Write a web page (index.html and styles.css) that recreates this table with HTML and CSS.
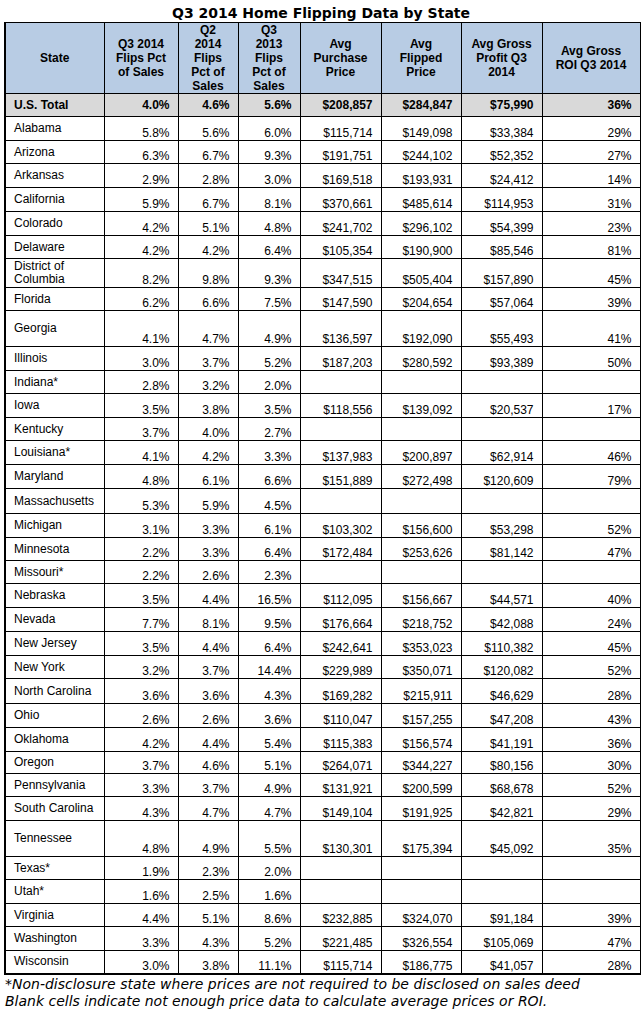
FILE: index.html
```html
<!DOCTYPE html>
<html lang="en">
<head>
<meta charset="utf-8">
<title>Q3 2014 Home Flipping Data by State</title>
<link rel="stylesheet" href="styles.css">
</head>
<body>
<div class="page">
  <h1 class="title">Q3 2014 Home Flipping Data by State</h1>
  <table class="flips">
    <colgroup>
      <col class="c-state"><col class="c-q3"><col class="c-q2"><col class="c-q313">
      <col class="c-buy"><col class="c-flip"><col class="c-profit"><col class="c-roi">
    </colgroup>
    <thead>
      <tr class="head">
        <th>State</th>
        <th>Q3 2014<br>Flips Pct<br>of Sales</th>
        <th>Q2<br>2014<br>Flips<br>Pct of<br>Sales</th>
        <th>Q3<br>2013<br>Flips<br>Pct of<br>Sales</th>
        <th>Avg<br>Purchase<br>Price</th>
        <th>Avg<br>Flipped<br>Price</th>
        <th>Avg Gross<br>Profit Q3<br>2014</th>
        <th>Avg Gross<br>ROI Q3 2014</th>
      </tr>
    </thead>
    <tbody>
      <tr class="total h23"><td class="st">U.S. Total</td><td>4.0%</td><td>4.6%</td><td>5.6%</td><td>$208,857</td><td>$284,847</td><td>$75,990</td><td>36%</td></tr>
      <tr><td class="st">Alabama</td><td>5.8%</td><td>5.6%</td><td>6.0%</td><td>$115,714</td><td>$149,098</td><td>$33,384</td><td>29%</td></tr>
      <tr class="h23"><td class="st">Arizona</td><td>6.3%</td><td>6.7%</td><td>9.3%</td><td>$191,751</td><td>$244,102</td><td>$52,352</td><td>27%</td></tr>
      <tr><td class="st">Arkansas</td><td>2.9%</td><td>2.8%</td><td>3.0%</td><td>$169,518</td><td>$193,931</td><td>$24,412</td><td>14%</td></tr>
      <tr><td class="st">California</td><td>5.9%</td><td>6.7%</td><td>8.1%</td><td>$370,661</td><td>$485,614</td><td>$114,953</td><td>31%</td></tr>
      <tr><td class="st">Colorado</td><td>4.2%</td><td>5.1%</td><td>4.8%</td><td>$241,702</td><td>$296,102</td><td>$54,399</td><td>23%</td></tr>
      <tr class="h23"><td class="st">Delaware</td><td>4.2%</td><td>4.2%</td><td>6.4%</td><td>$105,354</td><td>$190,900</td><td>$85,546</td><td>81%</td></tr>
      <tr class="h29"><td class="st">District of Columbia</td><td>8.2%</td><td>9.8%</td><td>9.3%</td><td>$347,515</td><td>$505,404</td><td>$157,890</td><td>45%</td></tr>
      <tr class="h23"><td class="st">Florida</td><td>6.2%</td><td>6.6%</td><td>7.5%</td><td>$147,590</td><td>$204,654</td><td>$57,064</td><td>39%</td></tr>
      <tr class="h36"><td class="st">Georgia</td><td>4.1%</td><td>4.7%</td><td>4.9%</td><td>$136,597</td><td>$192,090</td><td>$55,493</td><td>41%</td></tr>
      <tr><td class="st">Illinois</td><td>3.0%</td><td>3.7%</td><td>5.2%</td><td>$187,203</td><td>$280,592</td><td>$93,389</td><td>50%</td></tr>
      <tr class="h23"><td class="st">Indiana*</td><td>2.8%</td><td>3.2%</td><td>2.0%</td><td></td><td></td><td></td><td></td></tr>
      <tr><td class="st">Iowa</td><td>3.5%</td><td>3.8%</td><td>3.5%</td><td>$118,556</td><td>$139,092</td><td>$20,537</td><td>17%</td></tr>
      <tr class="h23"><td class="st">Kentucky</td><td>3.7%</td><td>4.0%</td><td>2.7%</td><td></td><td></td><td></td><td></td></tr>
      <tr><td class="st">Louisiana*</td><td>4.1%</td><td>4.2%</td><td>3.3%</td><td>$137,983</td><td>$200,897</td><td>$62,914</td><td>46%</td></tr>
      <tr><td class="st">Maryland</td><td>4.8%</td><td>6.1%</td><td>6.6%</td><td>$151,889</td><td>$272,498</td><td>$120,609</td><td>79%</td></tr>
      <tr class="h25"><td class="st">Massachusetts</td><td>5.3%</td><td>5.9%</td><td>4.5%</td><td></td><td></td><td></td><td></td></tr>
      <tr><td class="st">Michigan</td><td>3.1%</td><td>3.3%</td><td>6.1%</td><td>$103,302</td><td>$156,600</td><td>$53,298</td><td>52%</td></tr>
      <tr class="h23"><td class="st">Minnesota</td><td>2.2%</td><td>3.3%</td><td>6.4%</td><td>$172,484</td><td>$253,626</td><td>$81,142</td><td>47%</td></tr>
      <tr class="h23"><td class="st">Missouri*</td><td>2.2%</td><td>2.6%</td><td>2.3%</td><td></td><td></td><td></td><td></td></tr>
      <tr><td class="st">Nebraska</td><td>3.5%</td><td>4.4%</td><td>16.5%</td><td>$112,095</td><td>$156,667</td><td>$44,571</td><td>40%</td></tr>
      <tr><td class="st">Nevada</td><td>7.7%</td><td>8.1%</td><td>9.5%</td><td>$176,664</td><td>$218,752</td><td>$42,088</td><td>24%</td></tr>
      <tr><td class="st">New Jersey</td><td>3.5%</td><td>4.4%</td><td>6.4%</td><td>$242,641</td><td>$353,023</td><td>$110,382</td><td>45%</td></tr>
      <tr class="h23"><td class="st">New York</td><td>3.2%</td><td>3.7%</td><td>14.4%</td><td>$229,989</td><td>$350,071</td><td>$120,082</td><td>52%</td></tr>
      <tr class="h25"><td class="st">North Carolina</td><td>3.6%</td><td>3.6%</td><td>4.3%</td><td>$169,282</td><td>$215,911</td><td>$46,629</td><td>28%</td></tr>
      <tr><td class="st">Ohio</td><td>2.6%</td><td>2.6%</td><td>3.6%</td><td>$110,047</td><td>$157,255</td><td>$47,208</td><td>43%</td></tr>
      <tr><td class="st">Oklahoma</td><td>4.2%</td><td>4.4%</td><td>5.4%</td><td>$115,383</td><td>$156,574</td><td>$41,191</td><td>36%</td></tr>
      <tr class="h22"><td class="st">Oregon</td><td>3.7%</td><td>4.6%</td><td>5.1%</td><td>$264,071</td><td>$344,227</td><td>$80,156</td><td>30%</td></tr>
      <tr class="h23"><td class="st">Pennsylvania</td><td>3.3%</td><td>3.7%</td><td>4.9%</td><td>$131,921</td><td>$200,599</td><td>$68,678</td><td>52%</td></tr>
      <tr><td class="st">South Carolina</td><td>4.3%</td><td>4.7%</td><td>4.7%</td><td>$149,104</td><td>$191,925</td><td>$42,821</td><td>29%</td></tr>
      <tr class="h36"><td class="st">Tennessee</td><td>4.8%</td><td>4.9%</td><td>5.5%</td><td>$130,301</td><td>$175,394</td><td>$45,092</td><td>35%</td></tr>
      <tr class="h23"><td class="st">Texas*</td><td>1.9%</td><td>2.3%</td><td>2.0%</td><td></td><td></td><td></td><td></td></tr>
      <tr><td class="st">Utah*</td><td>1.6%</td><td>2.5%</td><td>1.6%</td><td></td><td></td><td></td><td></td></tr>
      <tr class="h23"><td class="st">Virginia</td><td>4.4%</td><td>5.1%</td><td>8.6%</td><td>$232,885</td><td>$324,070</td><td>$91,184</td><td>39%</td></tr>
      <tr><td class="st">Washington</td><td>3.3%</td><td>4.3%</td><td>5.2%</td><td>$221,485</td><td>$326,554</td><td>$105,069</td><td>47%</td></tr>
      <tr class="h23 last"><td class="st">Wisconsin</td><td>3.0%</td><td>3.8%</td><td>11.1%</td><td>$115,714</td><td>$186,775</td><td>$41,057</td><td>28%</td></tr>
    </tbody>
  </table>
  <p class="note">*Non-disclosure state where prices are not required to be disclosed on sales deed<br>Blank cells indicate not enough price data to calculate average prices or ROI.</p>
</div>
</body>
</html>
```

FILE: styles.css
```css
html, body {
  margin: 0;
  padding: 0;
  background: #ffffff;
}

.page {
  width: 642px;
  padding-left: 4px;
  box-sizing: border-box;
}

.title {
  margin: 0;
  padding-top: 5px;
  width: 634px;
  text-align: center;
  font-family: "DejaVu Sans", Verdana, sans-serif;
  font-weight: bold;
  font-size: 14px;
  line-height: 17px;
  color: #000;
}

.flips {
  border-collapse: collapse;
  table-layout: fixed;
  width: 635px;
  font-family: "Liberation Sans", Arial, sans-serif;
  font-size: 12px;
  color: #000;
}

.c-state { width: 99px; }
.c-q3 { width: 74px; }
.c-q2 { width: 60px; }
.c-q313 { width: 62px; }
.c-buy { width: 81px; }
.c-flip { width: 80px; }
.c-profit { width: 81px; }
.c-roi { width: 98px; }

.flips th,
.flips td {
  border: 1px solid #000;
}

.flips th:first-child,
.flips td.st {
  border-left-width: 2px;
}

.flips tr.last td {
  border-bottom-width: 2px;
}

.head {
  height: 71px;
}

.head th {
  background: #b8cce4;
  font-weight: bold;
  text-align: center;
  vertical-align: middle;
  line-height: 14px;
  padding: 0 3px;
}

.flips tbody tr {
  height: 24px;
}

.flips tbody tr.h22 { height: 22px; }
.flips tbody tr.h23 { height: 23px; }
.flips tbody tr.h25 { height: 25px; }
.flips tbody tr.h29 { height: 29px; }
.flips tbody tr.h36 { height: 36px; }

.flips td {
  text-align: right;
  vertical-align: bottom;
  line-height: 13px;
  padding: 0 8px 0 4px;
  white-space: nowrap;
}

.flips td.st {
  text-align: left;
  vertical-align: middle;
  padding: 0 4px 0 8px;
  white-space: normal;
}

.total td {
  background: #d9d9d9;
  font-weight: bold;
  vertical-align: middle;
}

.note {
  margin: 1px 0 0 1px;
  font-family: "DejaVu Sans", Verdana, sans-serif;
  font-style: italic;
  font-size: 14px;
  line-height: 17px;
  color: #000;
}
```
